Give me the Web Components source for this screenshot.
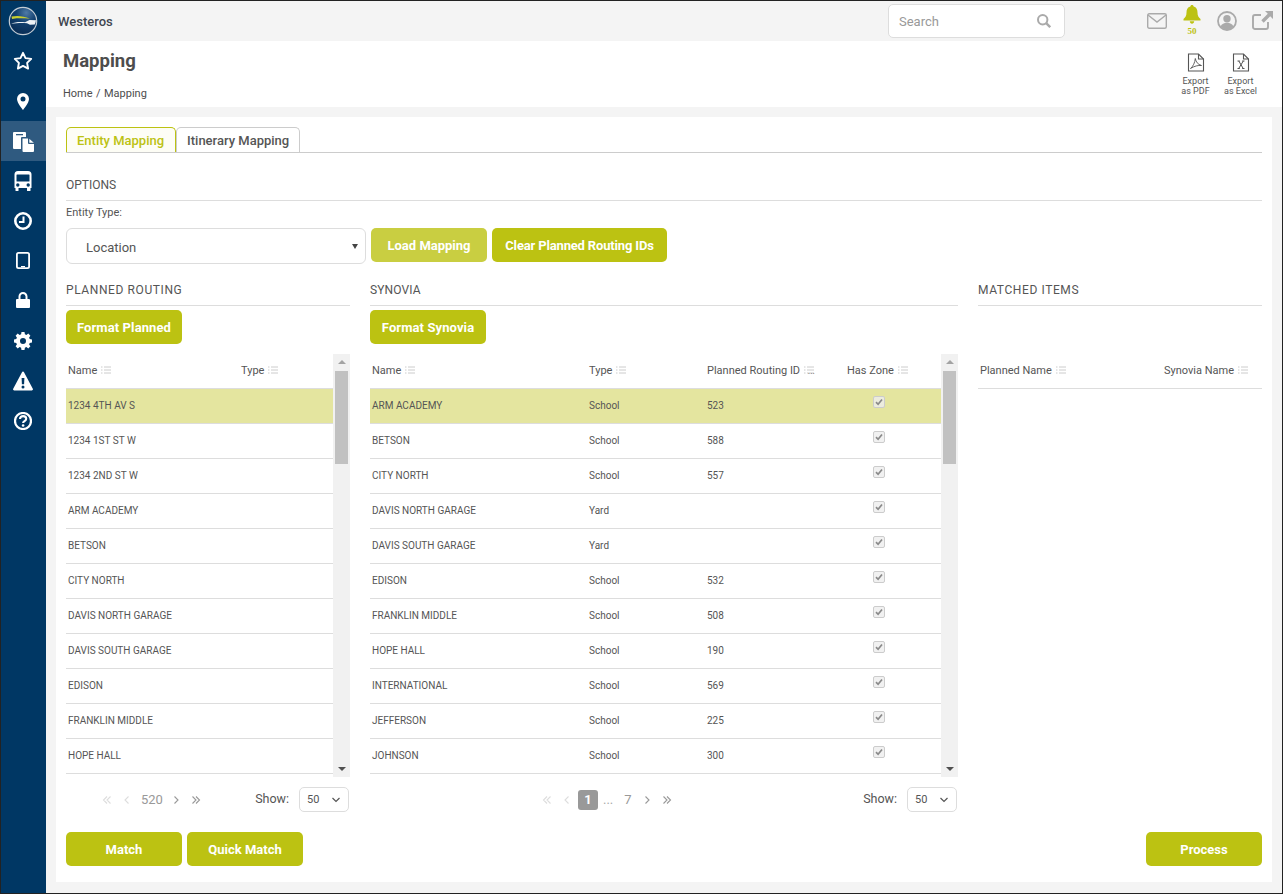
<!DOCTYPE html>
<html>
<head>
<meta charset="utf-8">
<title>Mapping</title>
<style>
  html, body { margin: 0; padding: 0; background: #fff; }
  body { font-family: Roboto, "Liberation Sans", sans-serif; color: #4d4d4d; }
</style>
</head>
<body>
<app-shell>
  <side-nav slot="nav"></side-nav>
  <top-bar slot="top" name="Westeros"></top-bar>
  <page-head slot="head" title="Mapping"></page-head>

  <tab-bar>
    <tab-item active>Entity Mapping</tab-item>
    <tab-item>Itinerary Mapping</tab-item>
  </tab-bar>

  <section-head style="margin-top:23px">Options</section-head>
  <field-label>Entity Type:</field-label>
  <form-row>
    <big-select>Location</big-select>
    <lime-button faded>Load Mapping</lime-button>
    <lime-button wide style="letter-spacing:-.16px">Clear Planned Routing IDs</lime-button>
  </form-row>

  <column-grid>
    <map-column heading="Planned Routing" style="--head-ls:.6px">
      <lime-button slot="action" style="letter-spacing:.1px">Format Planned</lime-button>
      <mapping-table source="planned"></mapping-table>
      <pager-bar style="--pager-left:36px" slot="pager"><page-nav total="520"></page-nav></pager-bar>
    </map-column>
    <map-column heading="Synovia" style="--head-ls:.1px">
      <lime-button slot="action" style="letter-spacing:.1px">Format Synovia</lime-button>
      <mapping-table source="synovia"></mapping-table>
      <pager-bar style="--pager-left:172px" slot="pager"><page-nav current="1" total="7"></page-nav></pager-bar>
    </map-column>
    <map-column heading="Matched Items" style="--head-ls:.6px">
      <mapping-table source="matched"></mapping-table>
    </map-column>
  </column-grid>

  <action-row>
    <lime-button>Match</lime-button>
    <lime-button>Quick Match</lime-button>
    <lime-button class="end" style="margin-left:auto">Process</lime-button>
  </action-row>
</app-shell>

<script>
// datos de las tablas
const TABLES = {
  planned: {
    cols: [{ t: 'Name', w: 173 }, { t: 'Type', w: 94 }],
    bar: true,
    rows: ['1234 4TH AV S', '1234 1ST ST W', '1234 2ND ST W', 'ARM ACADEMY', 'BETSON', 'CITY NORTH',
      'DAVIS NORTH GARAGE', 'DAVIS SOUTH GARAGE', 'EDISON', 'FRANKLIN MIDDLE', 'HOPE HALL'].map(n => [n, ''])
  },
  synovia: {
    cols: [{ t: 'Name', w: 217 }, { t: 'Type', w: 118 }, { t: 'Planned Routing ID', w: 140, cut: true }, { t: 'Has Zone', w: 96, check: true }],
    bar: true,
    rows: [
      ['ARM ACADEMY', 'School', '523'], ['BETSON', 'School', '588'], ['CITY NORTH', 'School', '557'],
      ['DAVIS NORTH GARAGE', 'Yard', ''], ['DAVIS SOUTH GARAGE', 'Yard', ''], ['EDISON', 'School', '532'],
      ['FRANKLIN MIDDLE', 'School', '508'], ['HOPE HALL', 'School', '190'], ['INTERNATIONAL', 'School', '569'],
      ['JEFFERSON', 'School', '225'], ['JOHNSON', 'School', '300']
    ]
  },
  matched: {
    cols: [{ t: 'Planned Name', w: 184 }, { t: 'Synovia Name', w: 100 }],
    bar: false,
    rows: []
  }
};

function shadowOf(el, html) {
  el.attachShadow({ mode: 'open' }).innerHTML = html;
}

class AppShell extends HTMLElement {
  constructor() {
    super();
    shadowOf(this, `
      <style>
        :host { display: block; width: 1283px; height: 894px; box-sizing: border-box; border: 1px solid #222; background: #f4f4f4; overflow: hidden; }
        .frame { display: flex; height: 100%; }
        .main { flex: 1; display: flex; flex-direction: column; min-width: 0; }
        .card { margin: 10px 10px 0; background: #fff; padding: 10px 10px 16px; height: 739px; }
      </style>
      <div class="frame">
        <slot name="nav"></slot>
        <div class="main">
          <slot name="top"></slot>
          <slot name="head"></slot>
          <div class="card"><slot></slot></div>
        </div>
      </div>`);
  }
}

class SideNav extends HTMLElement {
  constructor() {
    super();
    const items = [
      `<svg width="38" height="38" viewBox="0 0 38 38"><defs><radialGradient id="g" cx=".62" cy=".2" r=".75"><stop offset="0" stop-color="#4f7aa6"/><stop offset=".5" stop-color="#12406f"/><stop offset="1" stop-color="#0a2f58"/></radialGradient></defs><circle cx="19" cy="19" r="13.700" fill="url(#g)" stroke="#c3ccd4" stroke-width="1.200"/><path d="M7.500 14.500c6-1 12-.6 18.500 2.200-6-.3-11-.7-18 .2z" fill="#c8ce2e"/><path d="M7 21.800c4-1.800 9-2.300 14-1.500l4.500-2.400 6.500.4c-.2 1.500-.6 3-1.300 4.200l-4.700.2-3-1.400c-5-.8-10-.3-16 .5z" fill="#eef2f5"/></svg>`,
      `<svg width="20" height="19" viewBox="0 0 20 19" style="margin-top:-2px"><path d="M10 1.800l2.500 5.300 5.700.8-4.100 4 1 5.700-5.100-2.700-5.100 2.700 1-5.700-4.100-4 5.700-.8z" fill="none" stroke="#fff" stroke-width="1.900" stroke-linejoin="round"/></svg>`,
      `<svg width="12" height="17" viewBox="0 0 12 17"><path fill="#fff" fill-rule="evenodd" d="M6 0a6 6 0 0 0-6 6c0 4 6 11 6 11s6-7 6-11a6 6 0 0 0-6-6zm0 3.500a2.500 2.500 0 1 1 0 5 2.500 2.500 0 0 1 0-5z"/></svg>`,
      `<svg width="21" height="20" viewBox="0 0 21 20" style="margin:1px 0 0 1px"><path fill="#fff" d="M0 1a1 1 0 0 1 1-1h11a1 1 0 0 1 1 1v4H9a1 1 0 0 0-1 1v11H1a1 1 0 0 1-1-1z"/><path fill="#fff" d="M9.500 6.500H15V11a1 1 0 0 0 1 1h5v7a1 1 0 0 1-1 1H10.500a1 1 0 0 1-1-1z"/><path fill="#fff" d="M16.300 6.800l4.500 4H16.300z"/><rect x="3" y="2" width="7" height="1.300" fill="#2f5a80"/></svg>`,
      `<svg width="18" height="20" viewBox="0 0 18 20"><path fill="#fff" fill-rule="evenodd" d="M4 0h10a3.500 3.500 0 0 1 3.500 3.500V17h-1v2.500a.5.500 0 0 1-.5.500h-2.500a.5.500 0 0 1-.5-.5V17H4.500v2.500a.5.500 0 0 1-.5.500H2a.5.500 0 0 1-.5-.5V17H.5V3.500A3.500 3.500 0 0 1 4 0zM3 3.500a.5.500 0 0 0-.5.500v6a.5.500 0 0 0 .5.500h12a.5.500 0 0 0 .5-.5V4a.5.500 0 0 0-.5-.5zM3.800 12.300a1.700 1.700 0 1 0 0 3.400 1.700 1.700 0 0 0 0-3.400zm10.400 0a1.700 1.700 0 1 0 0 3.400 1.700 1.700 0 0 0 0-3.400z"/></svg>`,
      `<svg width="18" height="18" viewBox="0 0 18 18"><circle cx="9" cy="9" r="7.700" fill="none" stroke="#fff" stroke-width="2.600"/><path d="M9.500 4.500V10H5" fill="none" stroke="#fff" stroke-width="2"/></svg>`,
      `<svg width="14" height="17" viewBox="0 0 14 17" style="margin-top:-2px"><rect x=".9" y=".9" width="12.200" height="15.200" rx="1.600" fill="none" stroke="#fff" stroke-width="1.800"/><rect x="5" y="14" width="4" height="1.200" fill="#fff"/></svg>`,
      `<svg width="14" height="16" viewBox="0 0 14 16" style="margin-top:-2px"><path fill="#fff" d="M1 7h1.500V4.500a4.500 4.500 0 0 1 9 0V7H13a1 1 0 0 1 1 1v7a1 1 0 0 1-1 1H1a1 1 0 0 1-1-1V8a1 1 0 0 1 1-1z"/><path fill="#003764" d="M4.500 7h5V4.500a2.500 2.500 0 0 0-5 0z"/></svg>`,
      `<svg width="18" height="18" viewBox="0 0 18 18" style="margin-top:-1px"><path fill="#fff" fill-rule="evenodd" d="M7.500 0h3l.4 2.300 1.500.6 1.900-1.300 2.100 2.100-1.300 1.900.6 1.500L18 7.500v3l-2.300.4-.6 1.500 1.300 1.900-2.100 2.100-1.900-1.300-1.500.6-.4 2.300h-3l-.4-2.300-1.500-.6-1.900 1.300-2.100-2.100 1.300-1.900-.6-1.500L0 10.500v-3l2.300-.4.6-1.500-1.300-1.900 2.100-2.100 1.900 1.300 1.500-.6zM9 6a3 3 0 1 0 0 6 3 3 0 0 0 0-6z"/></svg>`,
      `<svg width="20" height="20" viewBox="0 0 20 20" style="margin-top:-1px"><path fill="#fff" fill-rule="evenodd" d="M10 .5c.5 0 .8.300 1 .7l8.800 16.500c.4.800-.1 1.800-1 1.800H1.200c-.9 0-1.400-1-1-1.800L9 1.200c.2-.4.500-.7 1-.7zM8.600 7l.3 6.300h2.200l.3-6.300zM10 14.500a1.500 1.500 0 1 0 0 3 1.500 1.500 0 0 0 0-3z"/></svg>`,
      `<svg width="18" height="18" viewBox="0 0 18 18"><circle cx="9" cy="9" r="8" fill="none" stroke="#fff" stroke-width="2.200"/><path d="M6 7c0-1.800 1.400-2.900 3.100-2.900S12.200 5.200 12.200 6.800c0 2.300-3.100 2.400-3.100 4.300" fill="none" stroke="#fff" stroke-width="2.100"/><circle cx="9.100" cy="13.500" r="1.300" fill="#fff"/></svg>`
    ];
    shadowOf(this, `
      <style>
        :host { display: block; width: 45px; height: 100%; background: #003764; flex: none; }
        .item { height: 40px; box-sizing: border-box; padding-right: 1px; display: flex; align-items: center; justify-content: center; }
        .item.on { background: #2f5a80; }
      </style>
      ${items.map((svg, i) => `<div class="item${i === 3 ? ' on' : ''}">${svg}</div>`).join('')}`);
  }
}

class TopBar extends HTMLElement {
  constructor() {
    super();
    shadowOf(this, `
      <style>
        :host { display: flex; align-items: center; height: 40px; padding: 0 9px 0 12px; background: #f4f4f4; }
        .name { font-size: 13px; font-weight: 500; color: #3f4650; flex: 1; }
        .search { width: 177px; height: 34px; box-sizing: border-box; background: #fff; border: 1px solid #ddd; border-radius: 5px; display: flex; align-items: center; justify-content: space-between; padding: 0 13px 0 10px; font-size: 13px; color: #999; margin-right: 82px; }
        .icons { display: flex; align-items: center; gap: 16px; }
        .bell { display: flex; flex-direction: column; align-items: center; margin-top: -2px; }
        .count { font: 700 9px/8px "Liberation Serif", serif; color: #bcc212; margin-top: 3px; }
      </style>
      <div class="name">${this.getAttribute('name')}</div>
      <div class="search"><span>Search</span>
        <svg width="14" height="14" viewBox="0 0 14 14"><circle cx="5.700" cy="5.700" r="4.700" fill="none" stroke="#aaa" stroke-width="2"/><path d="M9.200 9.200l4 4" stroke="#aaa" stroke-width="2.400"/></svg>
      </div>
      <div class="icons">
        <svg width="20" height="16" viewBox="0 0 20 16"><rect x=".7" y=".7" width="18.600" height="14.600" rx="1.500" fill="none" stroke="#aaa" stroke-width="1.400"/><path d="M1 2l9 7 9-7" fill="none" stroke="#aaa" stroke-width="1.400"/></svg>
        <div class="bell">
          <svg width="18" height="19" viewBox="0 0 18 19"><path fill="#bcc212" d="M9 0c1 0 1.600.7 1.600 1.500 2.900.7 3.900 3 3.900 6 0 3.500 1.200 5 3 6.500v1.500H.500V14c1.800-1.500 3-3 3-6.500 0-3 1-5.300 3.900-6C7.400.700 8 0 9 0zM6.800 16.300h4.400c0 1.500-1 2.400-2.200 2.400s-2.200-.9-2.200-2.400z"/></svg>
          <div class="count">50</div>
        </div>
        <svg width="20" height="20" viewBox="0 0 20 20"><circle cx="10" cy="10" r="9" fill="none" stroke="#aaa" stroke-width="1.800"/><circle cx="10" cy="7.800" r="3.700" fill="#aaa"/><path fill="#aaa" d="M3.600 15.500c1-2.600 3.400-3.700 6.400-3.700s5.400 1.100 6.400 3.700A9 9 0 0 1 10 19a9 9 0 0 1-6.400-3.500z"/></svg>
        <svg width="21" height="19" viewBox="0 0 21 19" style="margin:-2px 0 0 -1px"><path d="M16 11v5a2 2 0 0 1-2 2H3a2 2 0 0 1-2-2V6a2 2 0 0 1 2-2h6" fill="none" stroke="#aaa" stroke-width="1.900"/><path fill="#aaa" d="M13 0h8v8l-2.800-2.800-6.500 6.500-2.400-2.400 6.500-6.500z"/></svg>
      </div>`);
  }
}

class PageHead extends HTMLElement {
  constructor() {
    super();
    const doc = inner => `<svg width="18" height="19" viewBox="0 0 18 19"><path d="M1.500 1h10l5 5v12h-15z" fill="none" stroke="#555" stroke-width="1.100"/><path d="M11.500 1v5h5" fill="none" stroke="#555" stroke-width="1.100"/>${inner}</svg>`;
    shadowOf(this, `
      <style>
        :host { display: flex; justify-content: space-between; height: 66px; background: #fff; padding: 0 19px 0 17px; }
        h1 { margin: 8px 0 0; font: 700 18.500px/24px Roboto, sans-serif; color: #4d4d4d; }
        .crumb { margin-top: 14px; font-size: 11px; line-height: 14px; color: #4d4d4d; word-spacing: .7px; }
        .exports { display: flex; padding-top: 12px; }
        .exp { width: 45px; text-align: center; font-size: 9px; line-height: 10px; color: #555; }
        .exp svg { display: block; margin: 0 auto 4px; }
      </style>
      <div>
        <h1>${this.getAttribute('title')}</h1>
        <div class="crumb">Home / Mapping</div>
      </div>
      <div class="exports">
        <div class="exp">${doc('<path d="M3.500 15.500c2.500-2 4.500-6 4.800-10 .6 3.300 2.500 6 6.200 7-3.500-.3-7 .5-11 3z" fill="none" stroke="#555" stroke-width=".9"/>')}Export<br>as PDF</div>
        <div class="exp">${doc('<path d="M5.500 8h2.300M10.200 8h2.300M5.500 15.500h2.300M10.200 15.500h2.300M6.800 8l4.400 7.500M11.300 8l-4.600 7.500" fill="none" stroke="#555" stroke-width="1"/>')}Export<br>as Excel</div>
      </div>`);
  }
}

class TabBar extends HTMLElement {
  constructor() {
    super();
    shadowOf(this, `
      <style>:host { display: flex; height: 26px; box-sizing: border-box; border-bottom: 1px solid #ccc; }</style>
      <slot></slot>`);
  }
}

class TabItem extends HTMLElement {
  constructor() {
    super();
    shadowOf(this, `
      <style>
        :host { display: block; height: 25px; box-sizing: border-box; padding: 0 10px; border: 1px solid #ccc; border-bottom: 0; border-radius: 5px 5px 0 0; font-size: 13px; font-weight: 500; line-height: 26px; color: #555; background: #fff; }
        :host([active]) { color: #bcc212; border-color: #bcc212; background: #fdfdf5; padding-right: 11px; }
      </style>
      <slot></slot>`);
  }
}

class SectionHead extends HTMLElement {
  constructor() {
    super();
    shadowOf(this, `
      <style>:host { display: block; font-size: 12px; line-height: 16px; letter-spacing: var(--head-ls, 0); text-transform: uppercase; color: #555; padding: 1px 0 7px; border-bottom: 1px solid #ddd; }</style>
      <slot></slot>`);
  }
}

class FieldLabel extends HTMLElement {
  constructor() {
    super();
    shadowOf(this, `
      <style>:host { display: block; margin-top: 5px; font-size: 11px; line-height: 14px; color: #555; }</style>
      <slot></slot>`);
  }
}

class FormRow extends HTMLElement {
  constructor() {
    super();
    shadowOf(this, `
      <style>:host { display: flex; gap: 5px; margin-top: 8px; align-items: flex-start; }</style>
      <slot></slot>`);
  }
}

class BigSelect extends HTMLElement {
  constructor() {
    super();
    shadowOf(this, `
      <style>
        :host { display: flex; align-items: center; justify-content: space-between; width: 300px; height: 36px; box-sizing: border-box; border: 1px solid #ddd; border-radius: 6px; padding: 0 7px 0 19px; font-size: 13px; color: #555; }
        span { margin-top: 2px; }
        i { width: 0; height: 0; border: 3px solid transparent; border-top: 5px solid #444; border-bottom: 0; }
      </style>
      <span><slot></slot></span><i></i>`);
  }
}

class LimeButton extends HTMLElement {
  constructor() {
    super();
    shadowOf(this, `
      <style>
        :host { display: flex; align-items: center; justify-content: center; width: 116px; height: 34px; box-sizing: border-box; background: #bcc212; border-radius: 5px; color: #fff; font-size: 13px; font-weight: 700; flex: none; }
        :host([faded]) { background: #c9ce41; }
        :host([wide]) { width: 175px; }
      </style>
      <slot></slot>`);
  }
}

class ColumnGrid extends HTMLElement {
  constructor() {
    super();
    shadowOf(this, `
      <style>:host { display: grid; grid-template-columns: 284px 588px 284px; gap: 20px; margin-top: 17px; }</style>
      <slot></slot>`);
  }
}

class MapColumn extends HTMLElement {
  constructor() {
    super();
    shadowOf(this, `
      <style>
        :host { display: block; }
        .act { height: 34px; margin: 4px 0 10px; }
        .pager { display: block; margin-top: 10px; height: 25px; }
      </style>
      <section-head>${this.getAttribute('heading')}</section-head>
      <div class="act"><slot name="action"></slot></div>
      <slot></slot>
      <div class="pager"><slot name="pager"></slot></div>`);
  }
}

class MappingTable extends HTMLElement {
  constructor() {
    super();
    const cfg = TABLES[this.getAttribute('source')];
    const lines = `<svg class="ico" width="10" height="8" viewBox="0 0 10 8"><path d="M0 1h1.500M0 4h1.500M0 7h1.500M3 1h7M3 4h7M3 7h7" stroke="#ccc" stroke-width="1"/></svg>`;
    const template = cfg.cols.map(c => c.w + 'px').join(' ');
    const head = cfg.cols.map(c => `<div class="th"><span>${c.t} ${lines}${c.cut ? '<em>...</em>' : ''}</span></div>`).join('');
    const rows = cfg.rows.map((r, i) => `
      <div class="tr${i === 0 ? ' sel' : ''}">
        ${cfg.cols.map((c, k) => c.check
          ? `<div class="td"><b class="box"><svg width="8" height="8" viewBox="0 0 8 8"><path d="M1 4.200l2.100 2.100L7 1.500" fill="none" stroke="#8a8a8a" stroke-width="1.700"/></svg></b></div>`
          : `<div class="td">${r[k] || ''}</div>`).join('')}
      </div>`).join('');
    const bar = cfg.bar ? `
      <div class="bar">
        <i class="up"></i>
        <div class="thumb"></div>
        <i class="down"></i>
      </div>` : '';
    shadowOf(this, `
      <style>
        :host { display: flex; height: 423px; overflow: hidden; }
        .data { flex: 1; min-width: 0; }
        .hd, .tr { display: grid; grid-template-columns: ${template}; box-sizing: border-box; border-bottom: 1px solid #ddd; }
        .hd { height: 35px; align-items: center; font-size: 11px; color: #555; padding-bottom: 2px; }
        .th { padding-left: 2px; white-space: nowrap; }
        .ico { margin-left: 1px; }
        em { font-style: normal; font-size: 9px; color: #666; margin-left: -6px; }
        .tr { height: 35px; font-size: 10px; color: #555; align-items: center; padding-bottom: 2px; }
        .tr.sel { background: #e4e59f; }
        .td { padding-left: 2px; white-space: nowrap; }
        .box { display: flex; align-items: center; justify-content: center; width: 12px; height: 12px; box-sizing: border-box; margin: -6px 0 0 26px; background: rgba(238,238,238,.8); border: 1px solid #ccc; border-radius: 2px; }
        .bar { width: 17px; flex: none; background: #f1f1f1; display: flex; flex-direction: column; align-items: center; }
        .thumb { width: 13px; height: 93px; background: #c1c1c1; margin-top: 7px; }
        .up, .down { width: 0; height: 0; border: 4px solid transparent; border-top-width: 0; border-bottom: 4px solid #a3a3a3; margin-top: 6px; flex: none; }
        .down { border-top: 4px solid #505050; border-bottom-width: 0; margin-top: auto; margin-bottom: 6px; }
      </style>
      <div class="data"><div class="hd">${head}</div>${rows}</div>${bar}`);
  }
}

class PageNav extends HTMLElement {
  constructor() {
    super();
    const ch = (d, c) => `<svg width="10" height="10" viewBox="0 0 10 10"><path d="${d}" fill="none" stroke="${c}" stroke-width="1.100"/></svg>`;
    const cur = this.getAttribute('current');
    const total = this.getAttribute('total');
    const nums = cur
      ? `<b>${cur}</b><span class="dots">...</span><span class="seven">${total}</span>`
      : `<span class="n">${total}</span>`;
    shadowOf(this, `
      <style>
        :host { display: flex; align-items: center; height: 20px; gap: 10px; font-size: 13px; color: #999; }
        b { width: 20px; height: 20px; line-height: 20px; text-align: center; background: #999; color: #fff; border-radius: 3px; margin-left: -4px; }
        .dots { margin-left: -5px; color: #aaa; }
        .seven { margin-left: 1px; }
        .n { margin: 0 -2px 0 -1px; }
      </style>
      ${ch('M5 1.500L1.500 5 5 8.500M8.500 1.500L5 5l3.500 3.500', '#ddd')}
      ${ch('M6.500 1.500L3 5l3.500 3.500', '#ddd')}
      ${nums}
      ${ch('M3.500 1.500L7 5 3.500 8.500', '#999')}
      ${ch('M1.500 1.500L5 5 1.500 8.500M5 1.500L8.500 5 5 8.500', '#999')}`);
  }
}

class PagerBar extends HTMLElement {
  constructor() {
    super();
    shadowOf(this, `
      <style>
        :host { display: flex; align-items: center; height: 25px; padding-left: var(--pager-left, 0); padding-right: 1px; }
        .show { margin-left: auto; font-size: 12.500px; color: #555; margin-right: 10px; margin-top: -3px; }
        .sel { display: flex; align-items: center; justify-content: space-between; width: 50px; height: 25px; box-sizing: border-box; border: 1px solid #ddd; border-radius: 5px; padding: 0 7px 0 7px; font-size: 11px; color: #555; }
      </style>
      <slot></slot>
      <span class="show">Show:</span>
      <div class="sel"><span>50</span><svg width="10" height="6" viewBox="0 0 10 6"><path d="M1.500 1l3.500 3.500L8.500 1" fill="none" stroke="#555" stroke-width="1.200"/></svg></div>`);
  }
}

class ActionRow extends HTMLElement {
  constructor() {
    super();
    shadowOf(this, `
      <style>:host { display: flex; gap: 5px; margin-top: 20px; }</style>
      <slot></slot>`);
  }
}

// registro de elementos
customElements.define('app-shell', AppShell);
customElements.define('side-nav', SideNav);
customElements.define('top-bar', TopBar);
customElements.define('page-head', PageHead);
customElements.define('tab-bar', TabBar);
customElements.define('tab-item', TabItem);
customElements.define('section-head', SectionHead);
customElements.define('field-label', FieldLabel);
customElements.define('form-row', FormRow);
customElements.define('big-select', BigSelect);
customElements.define('lime-button', LimeButton);
customElements.define('column-grid', ColumnGrid);
customElements.define('map-column', MapColumn);
customElements.define('mapping-table', MappingTable);
customElements.define('page-nav', PageNav);
customElements.define('pager-bar', PagerBar);
customElements.define('action-row', ActionRow);
</script>
</body>
</html>
